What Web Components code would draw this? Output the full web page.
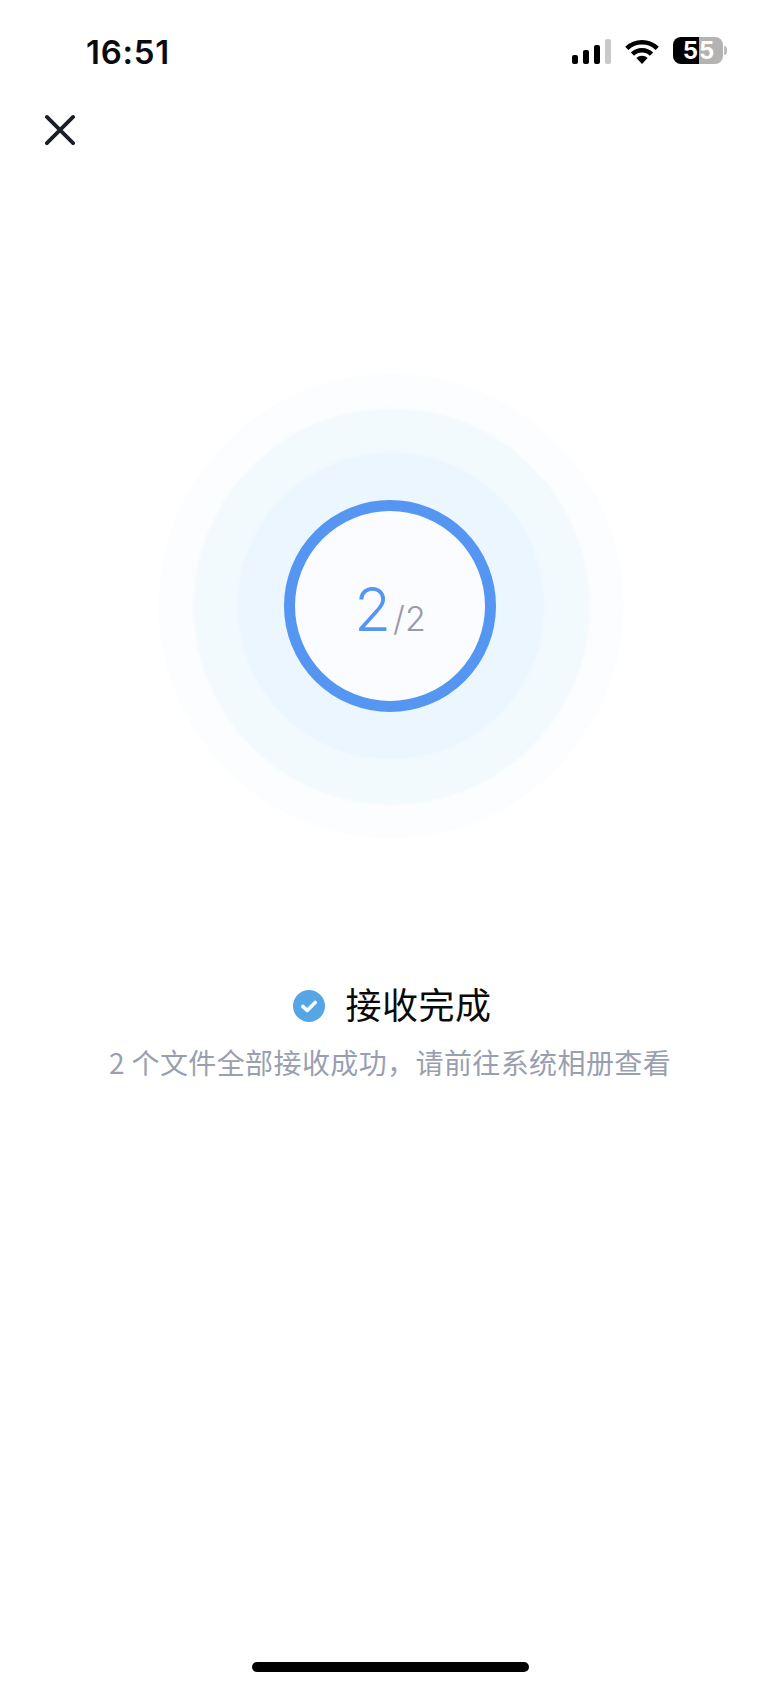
<!DOCTYPE html>
<html lang="zh-CN">
<head>
<meta charset="utf-8">
<title>接收完成</title>
<style>
html,body{margin:0;padding:0;background:#fff}
body{font-family:"Inter","Noto Sans CJK SC",sans-serif}
</style>
</head>
<body>
<transfer-page>
  <status-bar slot="top" time="16:51" level="55"></status-bar>
  <close-button slot="top"></close-button>
  <ripple-progress current="2" total="2"></ripple-progress>
  <result-message title-text="接收完成">2 个文件全部接收成功，请前往系统相册查看</result-message>
  <home-indicator slot="bottom"></home-indicator>
</transfer-page>
<script>
function def(name, html, init){
  customElements.define(name, class extends HTMLElement{
    constructor(){super();this.attachShadow({mode:'open'}).innerHTML=html;}
    connectedCallback(){ if(init) init(this, this.shadowRoot); }
  });
}
def('transfer-page',`<style>
:host{display:flex;flex-direction:column;width:780px;height:1688px;background:#fff;overflow:hidden}
.main{display:flex;flex-direction:column;align-items:center;flex:1}
</style>
<slot name="top"></slot>
<div class="main"><slot></slot></div>
<slot name="bottom"></slot>`);

def('status-bar',`<style>
:host{display:flex;justify-content:space-between;align-items:flex-start;height:100px;box-sizing:border-box;padding:32px 53px 0 86px}
.time{font:600 33px/40px "Inter","Liberation Sans",sans-serif;color:#0b0b0d;letter-spacing:.7px}
.icons{display:flex;align-items:flex-end;gap:14px;height:32px}
.sig{display:flex;align-items:flex-end;gap:5px}
.sig i{display:block;width:6px;border-radius:2px;background:#000}
.sig i:last-child{background:#c9c9c9}
svg{display:block}
.bat{display:flex;align-items:center;gap:1px}
.cell{display:flex;width:50px;height:27px;border-radius:8px;overflow:hidden}
.cell span{display:flex;justify-content:flex-end;align-items:center;width:26px;padding-right:1px;box-sizing:border-box;background:#000;color:#fff;font:700 24px/27px "Inter","Liberation Sans",sans-serif}
.cell span+span{width:24px;padding:0;background:#b3b3b3;justify-content:flex-start}
.nub{width:3px;height:9px;background:#bdbdbd;border-radius:0 3px 3px 0}
</style>
<div class="time"></div>
<div class="icons">
  <div class="sig"><i style="height:9px"></i><i style="height:14px"></i><i style="height:19px"></i><i style="height:25px"></i></div>
  <svg width="34" height="24" viewBox="0 0 34 24" fill="none" stroke="#000" stroke-width="4.6"><path d="M1.8 8.4A22 22 0 0 1 32.2 8.4"/><path d="M7.5 14.2A13.5 13.5 0 0 1 26.5 14.2"/><path d="M11.4 18A8 8 0 0 1 22.6 18L17 24Z" fill="#000" stroke="none"/></svg>
  <div class="bat"><div class="cell"><span class="a"></span><span class="b"></span></div><div class="nub"></div></div>
</div>`,(h,s)=>{
  s.querySelector('.time').textContent=h.getAttribute('time');
  const l=h.getAttribute('level');
  s.querySelector('.a').textContent=l[0];s.querySelector('.b').textContent=l[1];
});

def('close-button',`<style>
:host{display:block;height:60px;box-sizing:border-box;padding:0 0 0 45px}
svg{display:block}
</style>
<svg width="30" height="60" viewBox="0 0 30 60" fill="none" stroke="#1a1e28" stroke-width="3.8" stroke-linecap="round"><path d="M1.9 16.9L28.1 43.1M28.1 16.9L1.9 43.1"/></svg>`);

def('ripple-progress',`<style>
:host{display:block;margin-top:214px;margin-left:2px}
.c{display:flex;align-items:center;justify-content:center;border-radius:50%;box-sizing:border-box}
.r1{width:464px;height:464px;background:#fcfdfe;box-shadow:0 0 3px #fcfdfe}
.r2{width:395px;height:395px;background:#f3fafe;box-shadow:0 0 4px #f3fafe}
.r3{width:306px;height:306px;padding-right:2px;background:#ebf6fe;box-shadow:0 0 4px #ebf6fe}
.ring{width:212px;height:212px;border:11px solid #5596f2;background:#fafcff}
.num{display:flex;align-items:baseline;font-family:"Inter","Roboto",sans-serif;font-weight:350;padding-top:5px}
.cur{font-size:60px;line-height:58px;color:#5596f2}
.sl{font-size:34px;line-height:34px;font-weight:300;color:#9a9aa5;margin-left:2px}
</style>
<div class="c r1"><div class="c r2"><div class="c r3"><div class="c ring">
<div class="num"><span class="cur"></span><span class="sl"></span></div>
</div></div></div></div>`,(h,s)=>{
  s.querySelector('.cur').textContent=h.getAttribute('current');
  s.querySelector('.sl').textContent='/'+h.getAttribute('total');
});

def('result-message',`<style>
:host{display:flex;flex-direction:column;align-items:center;margin-top:146px}
.t{display:flex;align-items:center;gap:20px;height:44px;padding-left:5px}
.t span{font:400 36px/44px "Noto Sans CJK SC",sans-serif;color:#0a0a0a;letter-spacing:.5px;padding-bottom:6px}
svg{display:block}
.d{margin-top:14px;font:400 28px/40px "Noto Sans CJK SC",sans-serif;color:#9a9fb0;white-space:nowrap;letter-spacing:.4px}
</style>
<div class="t"><svg width="32" height="32" viewBox="0 0 32 32"><circle cx="16" cy="16" r="16" fill="#56a6e6"/><path d="M9.8 16.4L14.2 20.4L22.2 12.4" fill="none" stroke="#fff" stroke-width="3.6" stroke-linecap="round" stroke-linejoin="round"/></svg><span></span></div>
<div class="d"><slot></slot></div>`,(h,s)=>{
  s.querySelector('.t span').textContent=h.getAttribute('title-text');
});

def('home-indicator',`<style>
:host{display:flex;justify-content:center;padding-bottom:16px}
div{width:277px;height:10px;border-radius:5px;background:#000}
</style><div></div>`);
</script>
</body>
</html>
